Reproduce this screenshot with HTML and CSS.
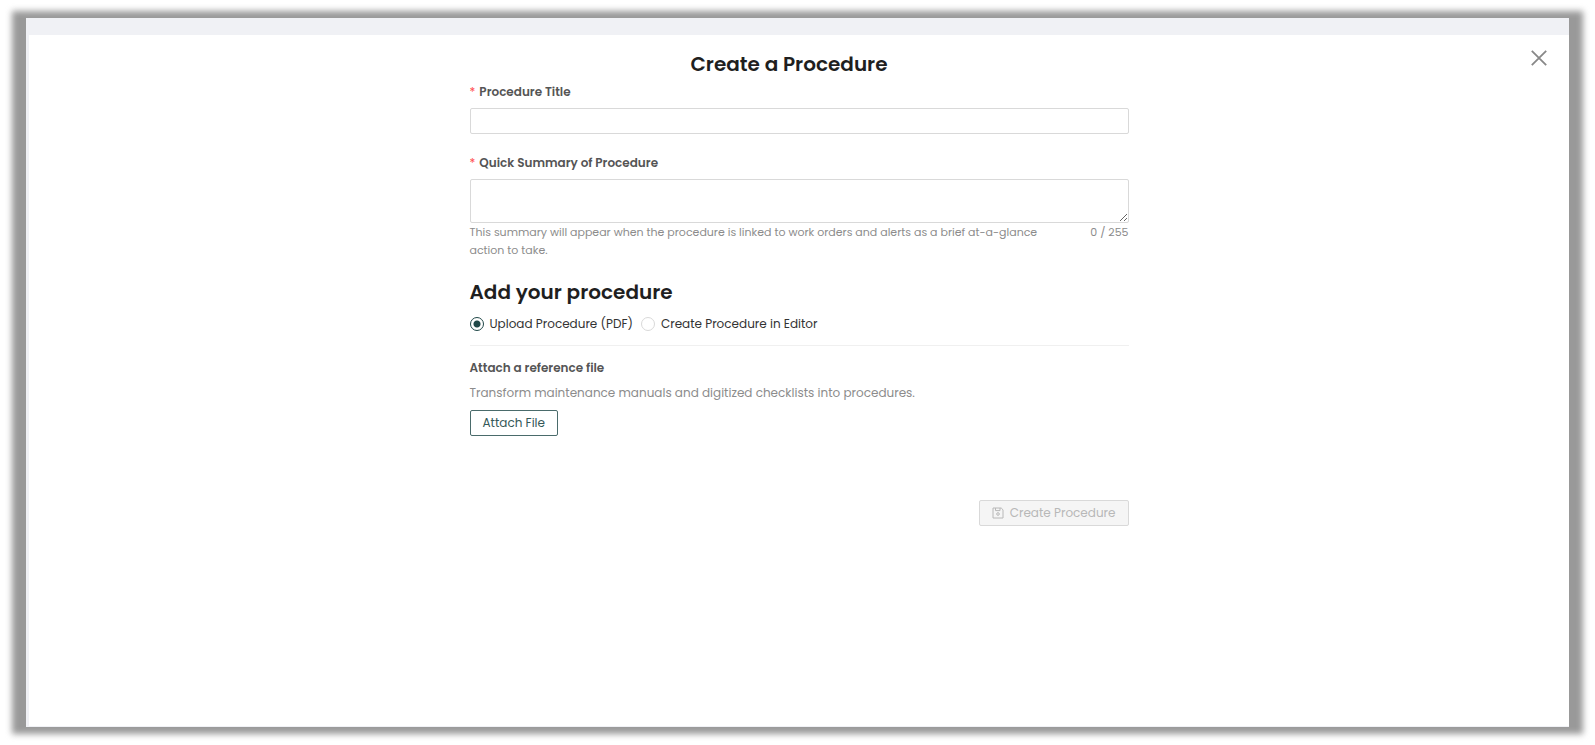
FILE: index.html
```html
<!DOCTYPE html>
<html lang="en">
<head>
    <meta charset="UTF-8">
    <meta name="viewport" content="width=device-width, initial-scale=1.0">
    <title>Create a Procedure</title>
    <link rel="stylesheet" href="styles.css">
</head>
<body>

<div class="frame">
    <main class="drawer">
        <button class="close-btn" type="button" aria-label="Close">
            <svg width="16" height="16" viewBox="0 0 16 16" fill="none" stroke="currentColor" stroke-width="1.8">
                <path d="M0.8 0.8 L15.2 15.2 M15.2 0.8 L0.8 15.2"/>
            </svg>
        </button>

        <h1 class="drawer-title">Create a Procedure</h1>

        <form class="procedure-form">
            <div class="field">
                <label class="required" for="title">Procedure Title</label>
                <input class="text-box" type="text" id="title">
            </div>

            <div class="field">
                <label class="required" for="summary">Quick Summary of Procedure</label>
                <textarea class="text-box summary-box" id="summary" maxlength="255"></textarea>
                <div class="help">
                    <p>This summary will appear when the procedure is linked to work orders and alerts as a brief at-a-glance action to take.</p>
                    <span class="count">0 / 255</span>
                </div>
            </div>

            <h2>Add your procedure</h2>
            <div class="options">
                <label><input type="radio" name="source" value="upload" checked>Upload Procedure (PDF)</label>
                <label><input type="radio" name="source" value="editor">Create Procedure in Editor</label>
            </div>

            <!-- File upload -->
            <div class="attach">
                <h3>Attach a reference file</h3>
                <p>Transform maintenance manuals and digitized checklists into procedures.</p>
                <button class="btn attach-btn" type="button">Attach File</button>
            </div>

            <div class="actions">
                <button class="btn create-btn" type="submit" disabled>
                    <svg width="12" height="12" viewBox="0 0 12 12" fill="none" stroke="currentColor">
                        <path d="M1 1 H9.2 L11 2.8 V11 H1 Z M3.5 1 V3.6 H8 V1"/>
                        <circle cx="6" cy="7" r="1.3"/>
                    </svg>
                    Create Procedure
                </button>
            </div>
        </form>
    </main>
</div>

</body>
</html>
```
FILE: styles.css
```css
* {
    box-sizing: border-box;
}
body {
    margin: 0;
    min-height: 100vh;
    padding: 18px 26px;
    display: flex;
    background-color: #fff;
    font-family: Poppins, Inter, sans-serif;
    font-size: 12px;
    line-height: 18px;
    color: #333;
}
h1, h2, h3, p {
    margin: 0;
}
.frame {
    position: relative;
    z-index: 0;
    flex: 1;
    display: flex;
    padding: 17px 0 1px 3px;
}
/* soft grey edge around the window */
.frame::before {
    content: '';
    position: absolute;
    inset: -7px -14px;
    z-index: -2;
    background-color: #999;
    filter: blur(3px);
}
.frame::after {
    content: '';
    position: absolute;
    inset: 0;
    z-index: -1;
    background-color: #f0f1f5;
}
.drawer {
    position: relative;
    flex: 1;
    padding: 14px 20px;
    background-color: #fff;
}
.close-btn {
    position: absolute;
    top: 15px;
    right: 22px;
    display: flex;
    padding: 0;
    border: none;
    background: none;
    color: #888;
    cursor: pointer;
}
.drawer-title,
h2 {
    font-size: 20px;
    line-height: 30px;
    font-weight: 600;
    color: #1f1f1f;
}
.drawer-title {
    padding-right: 20px;
    text-align: center;
}
.procedure-form {
    max-width: 659px;
    margin: 4px auto 0;
}
.field {
    display: flex;
    flex-direction: column;
    margin-bottom: 20px;
}
.field label,
h3 {
    font-size: 12px;
    line-height: 18px;
    font-weight: 600;
    color: #555;
}
.required::before {
    content: '*';
    margin-right: 4px;
    font-weight: 400;
    color: #ff4d4f;
}
.text-box {
    height: 26px;
    margin-top: 7px;
    padding: 4px 8px;
    border: 1px solid #d9d9d9;
    border-radius: 2px;
    font: inherit;
    outline: none;
}
.summary-box {
    height: 44px;
    resize: vertical;
}
.help {
    display: flex;
    justify-content: space-between;
    gap: 26px;
    font-size: 11px;
    color: #8c8c8c;
}
.count {
    flex-shrink: 0;
}
h2 {
    margin-top: -2px;
}
.options {
    display: flex;
    gap: 8px;
    padding: 8px 0 12px;
    border-bottom: 1px solid #f0f0f0;
}
.options label {
    display: flex;
    align-items: center;
    gap: 6px;
}
.options input {
    appearance: none;
    width: 14px;
    height: 14px;
    margin: 0;
    border: 1px solid #d9d9d9;
    border-radius: 50%;
}
.options input:checked {
    border-color: #1f4747;
    background: radial-gradient(circle, #1f4747 3px, #fff 4px);
}
.attach {
    padding-top: 13px;
}
.attach p {
    margin: 7px 0 8px;
    color: #8c8c8c;
}
.btn {
    display: inline-flex;
    align-items: center;
    justify-content: center;
    gap: 6px;
    height: 26px;
    padding: 0 12px;
    border: 1px solid;
    border-radius: 2px;
    font: inherit;
    cursor: pointer;
}
.attach-btn {
    border-color: #4a6b6b;
    background-color: #fff;
    color: #355858;
}
.actions {
    display: flex;
    justify-content: flex-end;
    margin-top: 64px;
}
.create-btn {
    border-color: #d9d9d9;
    background-color: #f5f5f5;
    color: #b8b8b8;
    cursor: not-allowed;
}
```
